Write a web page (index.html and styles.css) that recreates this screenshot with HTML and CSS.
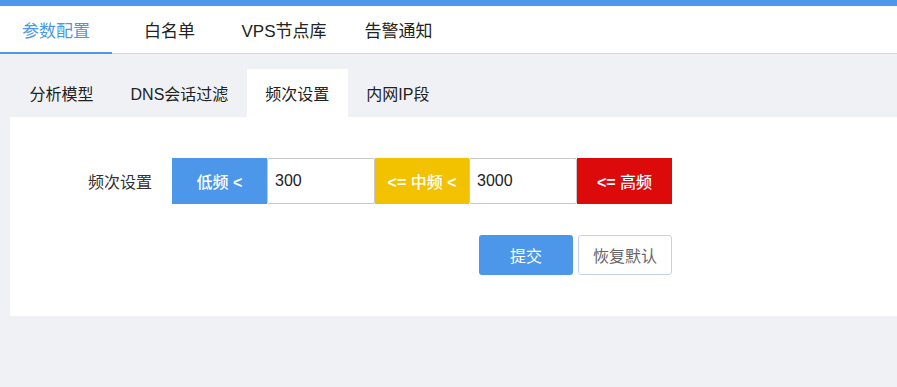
FILE: index.html
```html
<!DOCTYPE html>
<html lang="zh-CN">
<head>
<meta charset="utf-8">
<title>参数配置</title>
<link rel="stylesheet" href="styles.css">
</head>
<body>
<div class="topbar"></div>
<nav class="nav">
  <a class="nav-item active">参数配置</a>
  <a class="nav-item">白名单</a>
  <a class="nav-item">VPS节点库</a>
  <a class="nav-item">告警通知</a>
</nav>
<div class="subtabs">
  <a class="subtab">分析模型</a>
  <a class="subtab">DNS会话过滤</a>
  <a class="subtab active">频次设置</a>
  <a class="subtab">内网IP段</a>
</div>
<section class="panel">
  <div class="form-row">
    <label class="label">频次设置</label>
    <div class="group">
      <span class="addon blue"><span class="txt">低频 <b class="op">&lt;</b></span></span>
      <input class="field" type="text" value="300">
      <span class="addon yellow"><span class="txt"><b class="op">&lt;=</b> 中频 <b class="op">&lt;</b></span></span>
      <input class="field" type="text" value="3000">
      <span class="addon red"><span class="txt"><b class="op">&lt;=</b> 高频</span></span>
    </div>
  </div>
  <div class="actions">
    <button class="btn primary">提交</button>
    <button class="btn default">恢复默认</button>
  </div>
</section>
</body>
</html>
```

FILE: styles.css
```css
* { box-sizing: border-box; }
html, body {
  margin: 0;
  padding: 0;
  background: #f0f1f5;
  font-family: "Liberation Sans", "Noto Sans CJK SC", sans-serif;
  color: #333;
}
.topbar {
  height: 6px;
  background: #4c97ea;
}
.nav {
  display: flex;
  height: 48px;
  background: #fff;
  border-bottom: 1px solid #c6dbf1;
}
.nav-item {
  width: 111px;
  height: 48px;
  margin-right: 3.5px;
  margin-bottom: -1px;
  display: flex;
  align-items: center;
  justify-content: center;
  font-size: 17px;
  color: #222;
  padding-bottom: 2px;
}
.nav-item.active {
  width: 112px;
  margin-right: 2px;
  color: #4c97ea;
  box-shadow: inset 0 -2px 0 #4c97ea;
}
.subtabs {
  display: flex;
  padding: 15px 0 0 11px;
}
.subtab {
  height: 48px;
  padding: 0 18.5px;
  display: flex;
  align-items: center;
  font-size: 16px;
  color: #222;
}
.subtab.active {
  background: #fff;
}
.panel {
  margin-left: 10px;
  background: #fff;
  padding: 41px 0 41px 0;
}
.form-row {
  display: flex;
  align-items: center;
}
.label {
  width: 162px;
  padding-right: 20px;
  text-align: right;
  font-size: 16px;
  color: #333;
}
.group {
  display: flex;
  height: 46px;
}
.addon {
  display: flex;
  align-items: center;
  justify-content: center;
  color: #fff;
  font-size: 16px;
  font-weight: 500;
  height: 46px;
}
.txt {
  white-space: nowrap;
}
.op {
  font-weight: bold;
}
.blue { background: #4c97ea; width: 95px; }
.yellow { background: #f2c200; width: 94px; }
.red { background: #dc0a0b; width: 95px; }
.field {
  width: 108px;
  height: 46px;
  border: 1px solid #c8c8c8;
  border-radius: 2px;
  padding: 0 7px;
  font-family: inherit;
  font-size: 16px;
  color: #222;
  outline: none;
  margin: 0;
}
.actions {
  display: flex;
  gap: 5px;
  margin-top: 31px;
  margin-left: 469px;
}
.btn {
  width: 94px;
  height: 40px;
  border-radius: 3px;
  font-family: inherit;
  font-size: 16px;
  cursor: pointer;
  margin: 0;
}
.btn.primary {
  background: #4c97ea;
  color: #fff;
  border: none;
}
.btn.default {
  background: #fff;
  color: #666;
  border: 1px solid #c3d3ea;
}
```
